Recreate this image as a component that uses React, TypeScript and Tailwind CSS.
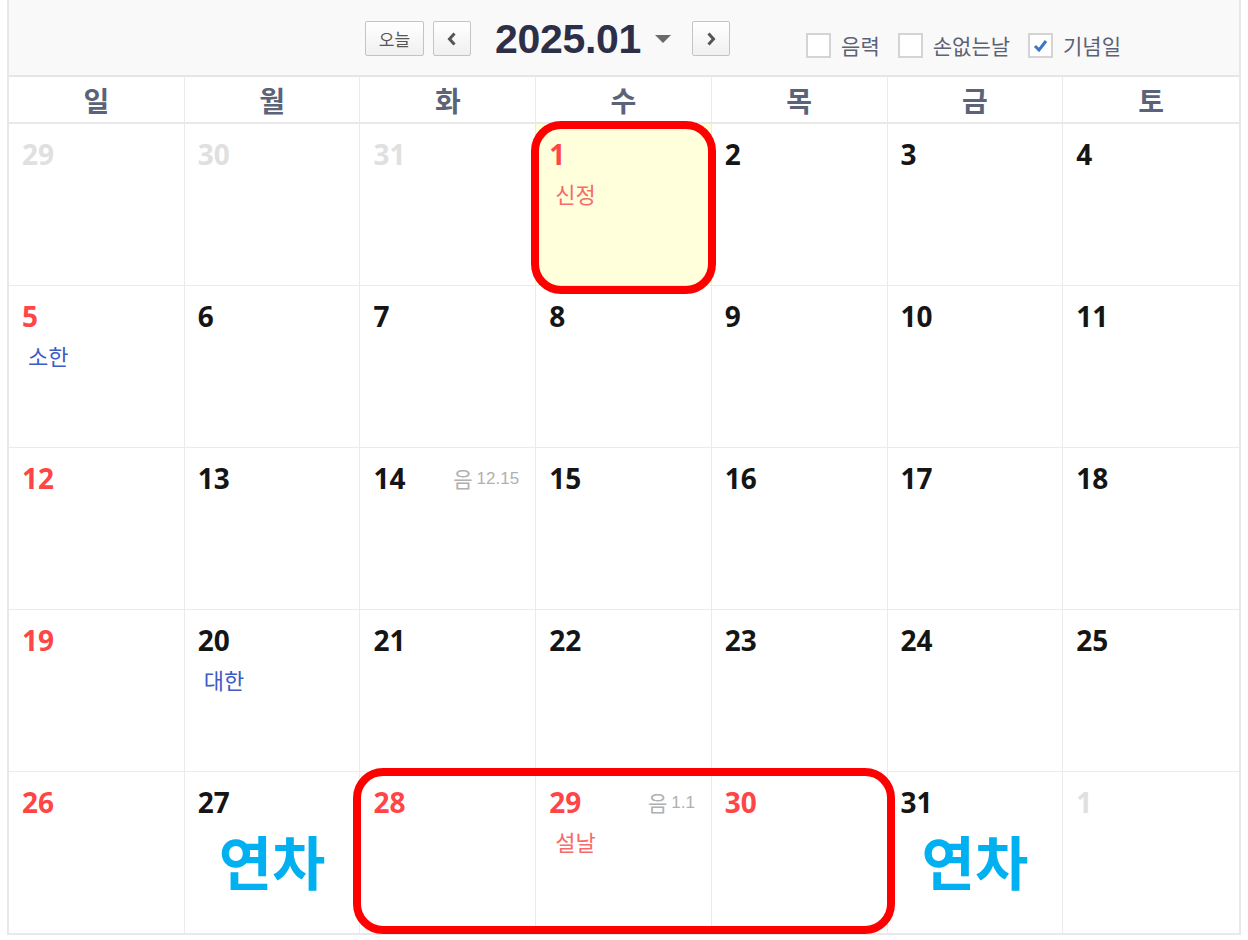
import React from 'react';

type Day = {
  d: number;
  other?: boolean;
  red?: boolean;
  label?: string;
  labelColor?: 'red' | 'blue';
  lunar?: string;
  leave?: boolean;
  today?: boolean;
};

const WEEKDAYS = ['일', '월', '화', '수', '목', '금', '토'];

const WEEKS: Day[][] = [
  [
    { d: 29, other: true },
    { d: 30, other: true },
    { d: 31, other: true },
    { d: 1, red: true, label: '신정', labelColor: 'red', today: true },
    { d: 2 },
    { d: 3 },
    { d: 4 },
  ],
  [
    { d: 5, red: true, label: '소한', labelColor: 'blue' },
    { d: 6 },
    { d: 7 },
    { d: 8 },
    { d: 9 },
    { d: 10 },
    { d: 11 },
  ],
  [
    { d: 12, red: true },
    { d: 13 },
    { d: 14, lunar: '12.15' },
    { d: 15 },
    { d: 16 },
    { d: 17 },
    { d: 18 },
  ],
  [
    { d: 19, red: true },
    { d: 20, label: '대한', labelColor: 'blue' },
    { d: 21 },
    { d: 22 },
    { d: 23 },
    { d: 24 },
    { d: 25 },
  ],
  [
    { d: 26, red: true },
    { d: 27, leave: true },
    { d: 28, red: true },
    { d: 29, red: true, lunar: '1.1', label: '설날', labelColor: 'red' },
    { d: 30, red: true },
    { d: 31, leave: true },
    { d: 1, other: true },
  ],
];

const font = { fontFamily: '"Open Sans", "Noto Sans CJK KR", sans-serif' };
const krFont = { fontFamily: '"Noto Sans CJK KR", sans-serif' };

const Checkbox: React.FC<{ label: string; checked?: boolean }> = ({ label, checked }) => (
  <div className="flex items-center gap-[10px]">
    <span className="w-[25px] h-[25px] border-2 border-[#d4d4d4] bg-white flex items-center justify-center">
      {checked && (
        <svg width="15" height="13" viewBox="0 0 15 13">
          <path d="M2 7 L6 11 L13 2" fill="none" stroke="#3b78c2" strokeWidth="3" />
        </svg>
      )}
    </span>
    <span className="text-[21px] text-[#5b6275] leading-none" style={krFont}>
      {label}
    </span>
  </div>
);

const NavButton: React.FC<{ dir: 'prev' | 'next' }> = ({ dir }) => (
  <button className="w-[38px] h-[35px] border border-[#c4c4c4] rounded-[2px] bg-gradient-to-b from-white to-[#f0f0f0] flex items-center justify-center">
    <svg width="12" height="16" viewBox="0 0 12 16">
      <path
        d={dir === 'prev' ? 'M8.5 2.5 L3.5 8 L8.5 13.5' : 'M3.5 2.5 L8.5 8 L3.5 13.5'}
        fill="none"
        stroke="#555"
        strokeWidth="3"
      />
    </svg>
  </button>
);

const Cell: React.FC<{ day: Day; last: boolean }> = ({ day, last }) => {
  const numColor = day.other ? 'text-[#e0e0e0]' : day.red ? 'text-[#ff4646]' : 'text-[#151515]';
  return (
    <div
      className={`h-[161px] px-[13px] pt-[16px] ${last ? '' : 'border-r border-[#ebebeb]'} ${
        day.today ? 'bg-[#ffffdc]' : 'bg-white'
      }`}
    >
      <div className="flex items-center justify-between">
        <span className={`text-[28px] font-bold leading-none ${numColor}`} style={font}>
          {day.d}
        </span>
        {day.lunar && (
          <span className="flex items-center gap-[4px] text-[#b0b0b0] pr-[3px]">
            <span className="text-[21px] leading-none" style={krFont}>
              음
            </span>
            <span className="text-[17px] leading-none" style={{ fontFamily: '"Liberation Sans", sans-serif' }}>
              {day.lunar}
            </span>
          </span>
        )}
      </div>
      {day.label && (
        <div
          className={`mt-[14px] pl-[6px] text-[22px] leading-none ${
            day.labelColor === 'red' ? 'text-[#f76b6b]' : 'text-[#3d5cc4]'
          }`}
          style={krFont}
        >
          {day.label}
        </div>
      )}
      {day.leave && (
        <div className="mt-[15px] text-center text-[58px] font-bold leading-none text-[#00b0f0]" style={krFont}>
          연차
        </div>
      )}
    </div>
  );
};

export default function App() {
  return (
    <div className="relative w-[1248px] h-[940px] bg-white overflow-hidden">
      <div className="ml-[7px] w-[1234px] border-x-2 border-b-2 border-[#e8e8e8]">
        {/* toolbar */}
        <div className="h-[77px] bg-[#f9f9f9] border-b-2 border-[#e6e6e6] flex items-start pl-[356px] pt-[21px]">
          <button
            className="w-[59px] h-[35px] border border-[#c4c4c4] rounded-[2px] bg-gradient-to-b from-white to-[#f0f0f0] text-[17px] text-[#555] leading-none"
            style={krFont}
          >
            오늘
          </button>
          <div className="ml-[9px]">
            <NavButton dir="prev" />
          </div>
          <span
            className="ml-[24px] text-[41px] font-bold leading-[36px] text-[#2c2f47] tracking-[-0.3px]"
            style={{ fontFamily: '"Liberation Sans", Arial, sans-serif' }}
          >
            2025.01
          </span>
          <svg className="ml-[14px] mt-[14px]" width="16" height="8" viewBox="0 0 16 8">
            <path d="M0 0 L16 0 L8 8 Z" fill="#6a6a6a" />
          </svg>
          <div className="ml-[21px]">
            <NavButton dir="next" />
          </div>
          <div className="ml-[76px] mt-[12px] flex items-center gap-[18px]">
            <Checkbox label="음력" />
            <Checkbox label="손없는날" />
            <Checkbox label="기념일" checked />
          </div>
        </div>

        {/* weekday header */}
        <div className="grid grid-cols-7 h-[47px] border-b-2 border-[#e8e8e8]">
          {WEEKDAYS.map((w, i) => (
            <div
              key={w}
              className={`flex items-center justify-center text-[28px] font-semibold text-[#5a6377] ${
                i < 6 ? 'border-r border-[#ebebeb]' : ''
              }`}
              style={krFont}
            >
              {w}
            </div>
          ))}
        </div>

        {/* weeks */}
        {WEEKS.map((week, wi) => (
          <div
            key={wi}
            className={`grid grid-cols-7 ${wi < WEEKS.length - 1 ? 'border-b border-[#ebebeb]' : ''}`}
          >
            {week.map((day, di) => (
              <Cell key={di} day={day} last={di === 6} />
            ))}
          </div>
        ))}
      </div>

      {/* highlight marks */}
      <div className="absolute left-[531px] top-[121px] w-[185px] h-[173px] border-[8px] border-[#ff0000] rounded-[30px]" />
      <div className="absolute left-[353px] top-[768px] w-[542px] h-[166px] border-[8px] border-[#ff0000] rounded-[30px]" />
    </div>
  );
}
